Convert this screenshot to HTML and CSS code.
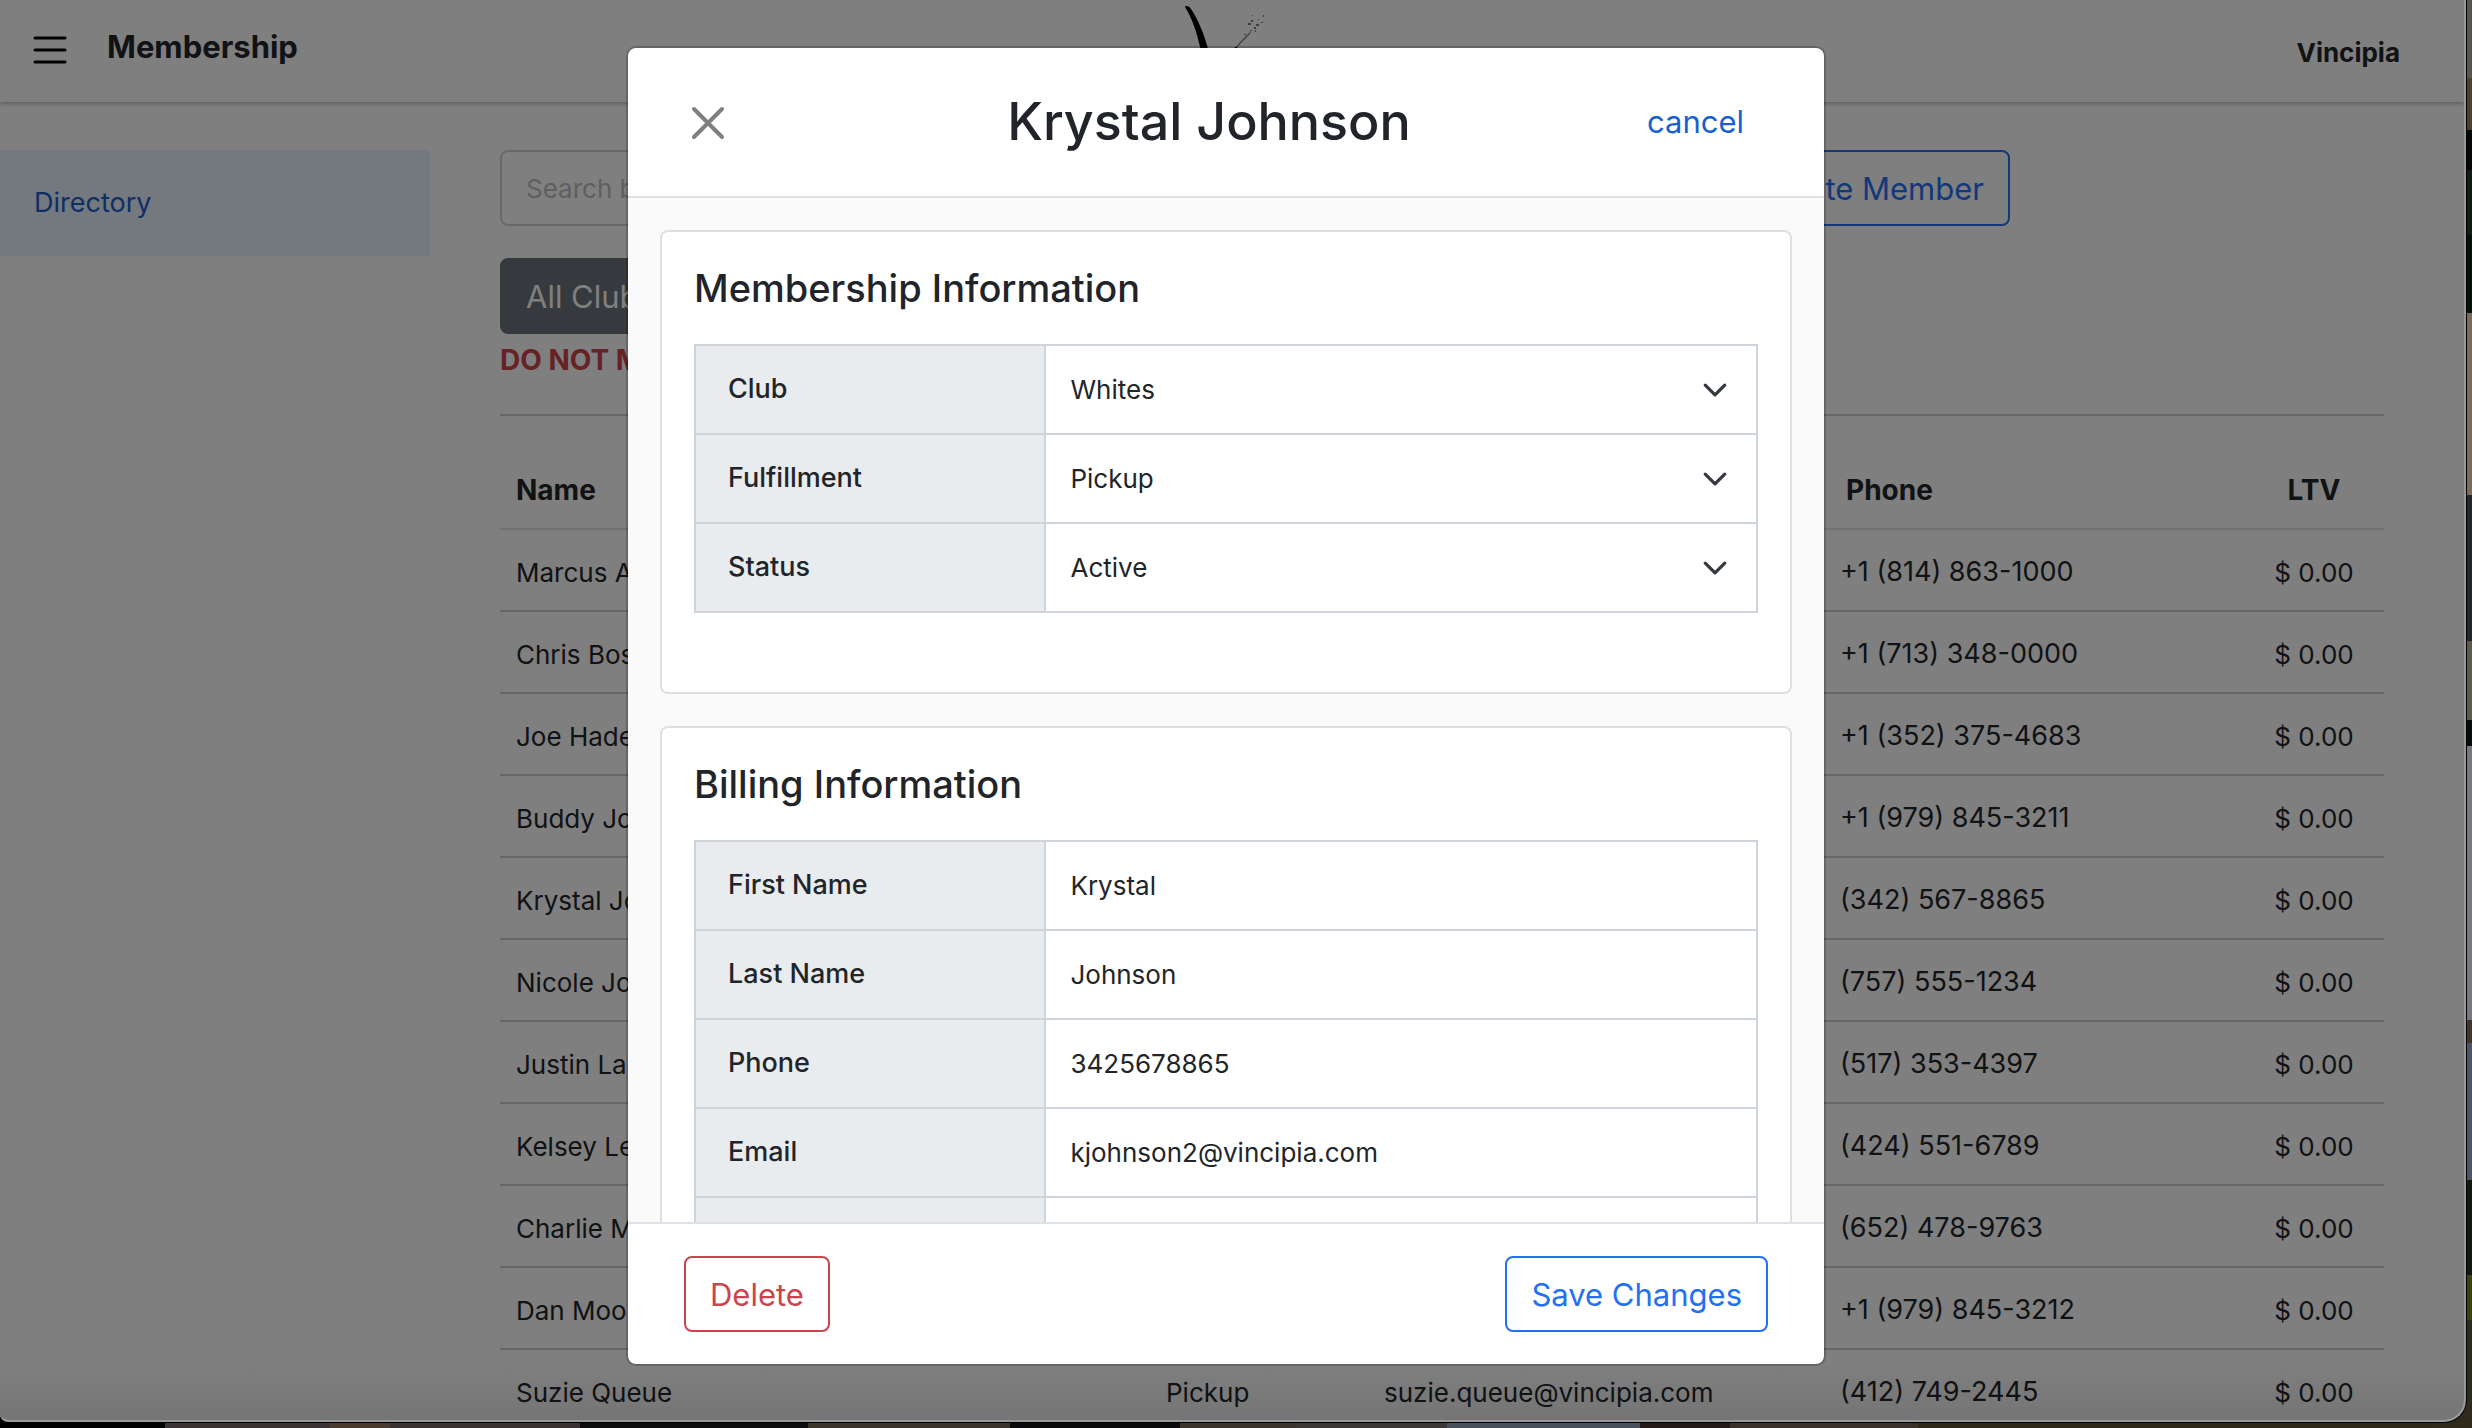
FILE: index.html
```html
<!DOCTYPE html>
<html lang="en">
<head>
  <meta charset="UTF-8" />
  <meta name="viewport" content="width=device-width, initial-scale=1.0"/>
  <title>Membership</title>
  <link rel="stylesheet" href="styles.css">
</head>
<body>
  <div class="window">
    <header class="topbar">
      <div class="topbar-left">
        <button class="menu-btn" aria-label="Menu">
          <svg width="34" height="30" viewBox="0 0 34 30" stroke="#000" stroke-width="3" stroke-linecap="round">
            <path d="M2 3h30M2 15h30M2 27h30"/>
          </svg>
        </button>
        <h1>Membership</h1>
      </div>
      <svg class="logo" width="80" height="90" viewBox="0 0 80 90">
        <path d="M0 1C1 -1 4 0 6 3C13 13 19 28 24 46L37 84L33 87C27 70 19 50 15 41C12 27 7 12 0 1Z" fill="#000"/>
        <path d="M50 42L55 36L62 29L68 23L64 29L56 37L52 42Z" fill="#000" opacity=".5"/>
        <path d="M63 17h3v2h-3zM66 14h2v2h-2zM71 18h3v2h-3zM69 21h2v2h-2zM67 9h1v1h-1zM76 16h2v1h-2zM78 9h1v2h-1zM73 13h1v1h-1zM65 24h1v1h-1zM59 28h2v1h-2zM70 24h1v2h-1z" fill="#000" opacity=".5"/>
        <path d="M36 84L51 41" stroke="#000" stroke-width="2"/>
      </svg>
      <strong class="account">Vincipia</strong>
    </header>

    <div class="page">
      <nav class="sidebar">
        <a href="#directory">Directory</a>
      </nav>

      <main class="content">
        <div class="toolbar">
          <input type="text" class="search" aria-label="Search" placeholder="Search by name">
          <button class="btn btn-outline-primary">Create Member</button>
        </div>
        <button class="btn btn-secondary">All Clubs</button>
        <p class="warning">DO NOT MAIL</p>

        <table class="members">
          <thead>
            <tr><th>Name</th><th></th><th></th><th>Phone</th><th>LTV</th></tr>
          </thead>
          <tbody>
            <tr><td>Marcus A</td><td></td><td></td><td>+1 (814) 863-1000</td><td>$ 0.00</td></tr>
            <tr><td>Chris Bos</td><td></td><td></td><td>+1 (713) 348-0000</td><td>$ 0.00</td></tr>
            <tr><td>Joe Hade</td><td></td><td></td><td>+1 (352) 375-4683</td><td>$ 0.00</td></tr>
            <tr><td>Buddy Jo</td><td></td><td></td><td>+1 (979) 845-3211</td><td>$ 0.00</td></tr>
            <tr><td>Krystal Johnson</td><td></td><td></td><td>(342) 567-8865</td><td>$ 0.00</td></tr>
            <tr><td>Nicole Jo</td><td></td><td></td><td>(757) 555-1234</td><td>$ 0.00</td></tr>
            <tr><td>Justin La</td><td></td><td></td><td>(517) 353-4397</td><td>$ 0.00</td></tr>
            <tr><td>Kelsey Le</td><td></td><td></td><td>(424) 551-6789</td><td>$ 0.00</td></tr>
            <tr><td>Charlie M</td><td></td><td></td><td>(652) 478-9763</td><td>$ 0.00</td></tr>
            <tr><td>Dan Moo</td><td></td><td></td><td>+1 (979) 845-3212</td><td>$ 0.00</td></tr>
            <tr><td>Suzie Queue</td><td>Pickup</td><td>suzie.queue@vincipia.com</td><td>(412) 749-2445</td><td>$ 0.00</td></tr>
          </tbody>
        </table>
      </main>
    </div>

    <div class="backdrop">
      <div class="modal" role="dialog" aria-labelledby="modal-title">
        <div class="modal-header">
          <button class="close-btn" aria-label="Close">
            <svg width="36" height="36" viewBox="0 0 36 36" stroke="#7f7f7f" stroke-width="4" stroke-linecap="round">
              <path d="M4 4L32 32M32 4L4 32"/>
            </svg>
          </button>
          <h2 id="modal-title">Krystal Johnson</h2>
          <a href="#cancel">cancel</a>
        </div>

        <div class="modal-body">
          <section class="card">
            <h3>Membership Information</h3>
            <table class="details">
              <tr>
                <th><label for="club">Club</label></th>
                <td><select id="club"><option>Whites</option></select></td>
              </tr>
              <tr>
                <th><label for="fulfillment">Fulfillment</label></th>
                <td><select id="fulfillment"><option>Pickup</option></select></td>
              </tr>
              <tr>
                <th><label for="status">Status</label></th>
                <td><select id="status"><option>Active</option></select></td>
              </tr>
            </table>
          </section>

          <section class="card">
            <h3>Billing Information</h3>
            <table class="details">
              <tr>
                <th><label for="first-name">First Name</label></th>
                <td><input type="text" id="first-name" value="Krystal"></td>
              </tr>
              <tr>
                <th><label for="last-name">Last Name</label></th>
                <td><input type="text" id="last-name" value="Johnson"></td>
              </tr>
              <tr>
                <th><label for="phone">Phone</label></th>
                <td><input type="text" id="phone" value="3425678865"></td>
              </tr>
              <tr>
                <th><label for="email">Email</label></th>
                <td><input type="text" id="email" value="kjohnson2@vincipia.com"></td>
              </tr>
              <tr>
                <th></th>
                <td></td>
              </tr>
            </table>
          </section>
        </div>

        <div class="modal-footer">
          <button class="btn btn-outline-danger">Delete</button>
          <button class="btn btn-outline-primary">Save Changes</button>
        </div>
      </div>
    </div>
  </div>
</body>
</html>
```
FILE: styles.css
```css
* {
  box-sizing: border-box;
}
/* desktop wallpaper peeking out right of and below the window */
body {
  margin: 0;
  height: 100vh;
  overflow: hidden;
  font-family: Inter, "Liberation Sans", sans-serif;
  font-size: 26px;
  line-height: 1.5;
  color: #212529;
  background:
    linear-gradient(#5a554c 0 78px, #4a4228 78px 130px, #050805 130px 170px, #0e1f12 170px 235px, #04120a 235px 313px, #7d6c55 313px 495px, #22242c 495px 641px, #5e5a4a 641px 720px, #050c10 720px 746px, #74797f 746px 1020px, #40342c 1020px 1043px, #4c5468 1043px 1180px, #0f1a0c 1180px 1275px, #3d4212 1275px 1320px, #2e2a1c 1320px) right / 40px 100% no-repeat,
    linear-gradient(90deg, #000 0 165px, #3b3434 165px 330px, #4a3a30 330px 390px, #3a3230 390px 580px, #0c0c0c 580px 808px, #3a342a 808px 1010px, #0a0a0a 1010px 1180px, #3a342a 1180px 1296px, #3a3836 1296px 1447px, #48525c 1447px 1640px, #241a16 1640px 1730px, #3a322a 1730px 1918px, #2c2a14 1918px);
}
.window {
  position: relative;
  height: calc(100vh - 6px);
  margin-right: 6px;
  overflow: hidden;
  background-color: #fff;
  border: 2px solid #999;
  border-top: none;
  border-left: none;
  border-radius: 0 0 22px 8px;
  box-shadow: 0 0 0 1px #000;
}
h1, h2, h3, p {
  margin: 0;
}
button, input, select {
  font: inherit;
  color: inherit;
}
a {
  color: #1a5fd0;
  text-decoration: none;
}

.topbar {
  display: grid;
  grid-template-columns: 1fr auto 1fr;
  height: 102px;
  padding: 0 64px 0 33px;
  box-shadow: 0 2px 4px rgba(0,0,0,0.25);
}
.topbar-left {
  display: flex;
  align-items: flex-start;
  gap: 40px;
  padding-top: 24px;
}
.topbar h1 {
  font-size: 31px;
  line-height: 46px;
}
.menu-btn, .close-btn {
  display: flex;
  padding: 0;
  background: none;
  border: none;
  cursor: pointer;
}
.menu-btn {
  padding-top: 11px;
}
.logo {
  margin: 6px 0 0 16px;
}
.account {
  justify-self: end;
  align-self: center;
  padding-top: 2px;
}

.page {
  display: flex;
  padding: 48px 80px 0 0;
  gap: 70px;
}
.sidebar {
  flex: 0 0 430px;
}
.sidebar a {
  display: block;
  padding: 32px 34px;
  font-size: 27px;
  line-height: 42px;
  background-color: #e8f0fe;
}
.content {
  flex: 1;
}
.toolbar {
  display: flex;
  justify-content: space-between;
  width: 1510px;
  margin-bottom: 32px;
}
.search {
  width: 1100px;
  padding: 0 24px;
  border: 2px solid #ced4da;
  border-radius: 8px;
}
.search::placeholder {
  color: #bfbfbf;
}
.btn {
  height: 76px;
  padding: 2px 24px 0;
  font-size: 31px;
  border: 2px solid;
  border-radius: 8px;
  background-color: transparent;
  cursor: pointer;
}
.btn-outline-primary {
  color: #2470f4;
}
.btn-outline-danger {
  color: #cc444b;
}
.btn-secondary {
  display: block;
  color: #fff;
  background-color: #6c757d;
  border-color: #6c757d;
}
.warning {
  padding: 6px 0 34px;
  font-size: 28px;
  line-height: 40px;
  font-weight: 700;
  color: #cc444b;
  border-bottom: 2px solid #ccc;
}

.members {
  width: 100%;
  margin-top: 31px;
  table-layout: fixed;
  border-collapse: collapse;
  text-align: left;
}
.members th, .members td {
  height: 82px;
  padding: 4px 16px 0;
  border-bottom: 2px solid #ccc;
}
.members th {
  font-size: 28px;
  border-color: #dee2e6;
}
.members th:nth-child(1) {
  width: 650px;
}
.members th:nth-child(2) {
  width: 218px;
}
.members th:nth-child(3) {
  width: 456px;
}
.members th:nth-child(4) {
  padding-left: 22px;
}
.members td:nth-child(4) {
  font-size: 27px;
}
.members th:nth-child(5) {
  width: 140px;
}
.members th:last-child, .members td:last-child {
  text-align: center;
}

.backdrop {
  position: absolute;
  inset: 0;
  display: flex;
  justify-content: center;
  padding: 46px 12px 54px 0;
  background: linear-gradient(rgba(0,0,0,0.5) 96%, rgba(0,0,0,0.54));
}
.modal {
  display: flex;
  flex-direction: column;
  width: 100%;
  max-width: 1200px;
  overflow: hidden;
  background-color: #fff;
  background-clip: padding-box;
  border: 2px solid rgba(0,0,0,0.2);
  border-radius: 10px;
}
.modal-header {
  display: grid;
  grid-template-columns: 1fr auto 1fr;
  align-items: center;
  height: 150px;
  padding: 0 80px 0 46px;
  border-bottom: 2px solid #dee2e6;
}
.close-btn {
  padding: 2px 16px 0;
}
.modal-header h2 {
  font-size: 52px;
  font-weight: 500;
}
.modal-header a {
  justify-self: end;
  font-size: 31px;
}
.modal-body {
  flex: 1;
  min-height: 0;
  padding: 32px;
  overflow-y: auto;
  scrollbar-width: none;
  background-color: #fafafa;
}
.card {
  margin-bottom: 32px;
  padding: 32px;
  background-color: #fff;
  border: 2px solid #dfdfdf;
  border-radius: 8px;
}
.card h3 {
  margin-bottom: 32px;
  font-size: 38px;
  line-height: 48px;
  font-weight: 500;
}
.details {
  width: 100%;
  margin-bottom: 47px;
  table-layout: fixed;
  border-collapse: collapse;
}
.details th, .details td {
  height: 89px;
  padding: 0;
  border: 2px solid #ced4da;
}
.details th {
  width: 33%;
  padding-left: 32px;
  font-size: 27px;
  font-weight: 500;
  text-align: left;
  background-color: #e9ecef;
}
.details input, .details select {
  display: block;
  width: 100%;
  padding: 0 24px;
  line-height: 40px;
  border: none;
  background-color: transparent;
}
.details select {
  appearance: none;
  background: url("data:image/svg+xml,%3csvg xmlns='http://www.w3.org/2000/svg' viewBox='0 0 16 16'%3e%3cpath fill='none' stroke='%23343a40' stroke-linecap='round' stroke-linejoin='round' stroke-width='2' d='M2 5l6 6 6-6'/%3e%3c/svg%3e") right 28px center / 26px 26px no-repeat;
}
.modal-footer {
  display: flex;
  align-items: center;
  justify-content: space-between;
  height: 142px;
  padding: 0 56px;
  border-top: 2px solid #dee2e6;
}
```
